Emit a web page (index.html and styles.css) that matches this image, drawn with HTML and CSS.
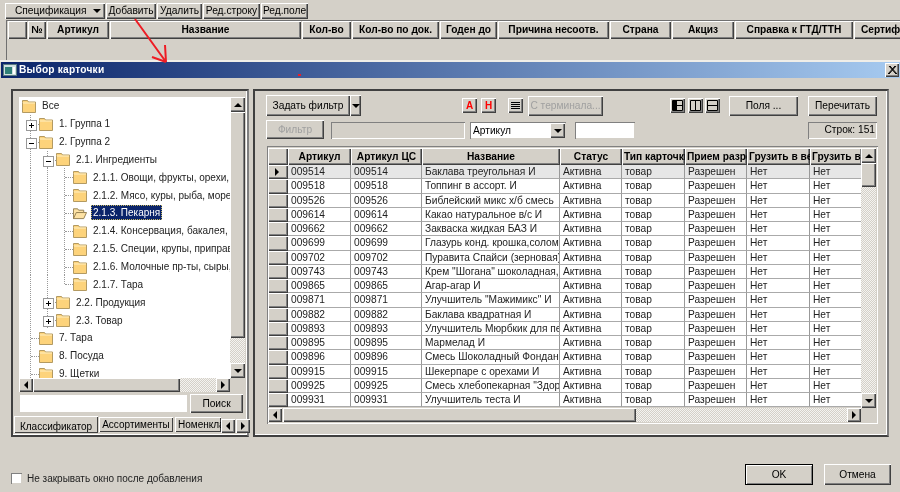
FILE: index.html
```html
<!DOCTYPE html>
<html lang="ru">
<head>
    <meta charset="UTF-8">
    <title>Выбор карточки</title>
    <link rel="stylesheet" href="styles.css">
</head>
<body>
<svg class="defs" width="0" height="0">
    <symbol id="folder" viewBox="0 0 14 14">
        <path d="M0.5 3.5 V1.5 H5.5 L6.5 3 H13.5 V13.5 H0.5 Z" fill="#fdd37b" stroke="#b39a62"/>
        <path d="M1 4 H13" stroke="#fff0c4"/>
    </symbol>
    <symbol id="folder-open" viewBox="0 0 15 14">
        <path d="M0.5 13 V2.5 H5 L6 4 H11.5 V6.5 H14.5 L11.5 13 Z" fill="#fde2a4" stroke="#8f7b4c"/>
        <path d="M0.5 13 L3.5 6.5 H11.5" fill="none" stroke="#8f7b4c"/>
    </symbol>
</svg>

<!-- спецификация за окном -->
<div class="back">
    <div class="back-tools">
        <span class="btn tool spec">Спецификация<i class="tri-down"></i></span>
        <span class="btn tool add">Добавить</span>
        <span class="btn tool del">Удалить</span>
        <span class="btn tool line">Ред.строку</span>
        <span class="btn tool fld">Ред.поле</span>
    </div>
    <div class="back-grid">
        <span class="hcell" style="width:19px"></span>
        <span class="hcell" style="width:18px">№</span>
        <span class="hcell" style="width:62px">Артикул</span>
        <span class="hcell" style="width:191px">Название</span>
        <span class="hcell" style="width:49px">Кол-во</span>
        <span class="hcell" style="width:87px">Кол-во по док.</span>
        <span class="hcell" style="width:57px">Годен до</span>
        <span class="hcell" style="width:111px">Причина несоотв.</span>
        <span class="hcell" style="width:61px">Страна</span>
        <span class="hcell" style="width:62px">Акциз</span>
        <span class="hcell" style="width:118px">Справка к ГТД/ТТН</span>
        <span class="hcell hcell-cut" style="width:60px">Сертификат</span>
    </div>
</div>

<div class="dialog">
    <div class="titlebar">
        <svg class="win-icon" width="14" height="12" viewBox="0 0 14 12">
            <rect x="0.5" y="0.5" width="13" height="11" fill="#cfe0e0" stroke="#5a7a80"/>
            <rect x="2" y="3" width="7" height="7" fill="#2f7f78"/>
            <rect x="10" y="3" width="2" height="7" fill="#fff"/>
        </svg>
        <span class="title-text">Выбор карточки</span>
        <span class="btn close-btn">
            <svg width="9" height="8" viewBox="0 0 9 8"><path d="M1 0 L8 8 M8 0 L1 8 M2 0 L9 8 M7 0 L0 8" stroke="#000" stroke-width="1"/></svg>
        </span>
    </div>

    <div class="panels">
        <div class="frame left-frame">
            <div class="tree-box">
                <div class="tree">
                    <div class="node"><svg class="fld-ico"><use href="#folder"/></svg><span class="node-text">Все</span></div>
                    <div class="node"><i class="ind cross plus"></i><svg class="fld-ico"><use href="#folder"/></svg><span class="node-text">1. Группа 1</span></div>
                    <div class="node"><i class="ind cross minus"></i><svg class="fld-ico"><use href="#folder"/></svg><span class="node-text">2. Группа 2</span></div>
                    <div class="node"><i class="ind vert"></i><i class="ind cross minus"></i><svg class="fld-ico"><use href="#folder"/></svg><span class="node-text">2.1. Ингредиенты</span></div>
                    <div class="node"><i class="ind vert"></i><i class="ind vert"></i><i class="ind tee"></i><svg class="fld-ico"><use href="#folder"/></svg><span class="node-text">2.1.1. Овощи, фрукты, орехи, зелень</span></div>
                    <div class="node"><i class="ind vert"></i><i class="ind vert"></i><i class="ind tee"></i><svg class="fld-ico"><use href="#folder"/></svg><span class="node-text">2.1.2. Мясо, куры, рыба, морепродукты</span></div>
                    <div class="node"><i class="ind vert"></i><i class="ind vert"></i><i class="ind tee"></i><svg class="fld-ico"><use href="#folder-open"/></svg><span class="node-text selected">2.1.3. Пекарня</span></div>
                    <div class="node"><i class="ind vert"></i><i class="ind vert"></i><i class="ind tee"></i><svg class="fld-ico"><use href="#folder"/></svg><span class="node-text">2.1.4. Консервация, бакалея, соусы</span></div>
                    <div class="node"><i class="ind vert"></i><i class="ind vert"></i><i class="ind tee"></i><svg class="fld-ico"><use href="#folder"/></svg><span class="node-text">2.1.5. Специи, крупы, приправы, мука</span></div>
                    <div class="node"><i class="ind vert"></i><i class="ind vert"></i><i class="ind tee"></i><svg class="fld-ico"><use href="#folder"/></svg><span class="node-text">2.1.6. Молочные пр-ты, сыры, масло</span></div>
                    <div class="node"><i class="ind vert"></i><i class="ind vert"></i><i class="ind corner"></i><svg class="fld-ico"><use href="#folder"/></svg><span class="node-text">2.1.7. Тара</span></div>
                    <div class="node"><i class="ind vert"></i><i class="ind cross plus"></i><svg class="fld-ico"><use href="#folder"/></svg><span class="node-text">2.2. Продукция</span></div>
                    <div class="node"><i class="ind vert"></i><i class="ind cross plus"></i><svg class="fld-ico"><use href="#folder"/></svg><span class="node-text">2.3. Товар</span></div>
                    <div class="node"><i class="ind tee"></i><svg class="fld-ico"><use href="#folder"/></svg><span class="node-text">7. Тара</span></div>
                    <div class="node"><i class="ind tee"></i><svg class="fld-ico"><use href="#folder"/></svg><span class="node-text">8. Посуда</span></div>
                    <div class="node"><i class="ind tee"></i><svg class="fld-ico"><use href="#folder"/></svg><span class="node-text">9. Щетки</span></div>
                </div>
                <div class="vbar">
                    <span class="btn sb-btn"><i class="tri-up"></i></span>
                    <span class="btn vthumb tree-vthumb"></span>
                    <span class="sb-track"></span>
                    <span class="btn sb-btn"><i class="tri-down"></i></span>
                </div>
                <div class="hbar">
                    <span class="btn sb-btn"><i class="tri-left"></i></span>
                    <span class="btn hthumb tree-hthumb"></span>
                    <span class="sb-track"></span>
                    <span class="btn sb-btn"><i class="tri-right"></i></span>
                </div>
            </div>
            <div class="search-row">
                <span class="input search-input"></span>
                <span class="btn search-btn">Поиск</span>
            </div>
            <div class="tabs">
                <span class="tab tab-active">Классификатор</span>
                <span class="tab">Ассортименты</span>
                <span class="tab tab-cut">Номенклатура</span>
                <span class="btn tab-arrow arrow-first"><i class="tri-left"></i></span>
                <span class="btn tab-arrow"><i class="tri-right"></i></span>
            </div>
        </div>

        <div class="frame right-frame">
            <div class="row-one">
                <span class="btn filter-btn">Задать фильтр</span>
                <span class="btn filter-drop"><i class="tri-down"></i></span>
                <span class="btn mark mark-a">А</span>
                <span class="btn mark mark-h">Н</span>
                <span class="btn mark mark-list">
                    <svg width="9" height="9" viewBox="0 0 9 9"><path d="M0 1.5H9M0 3.5H9M0 5.5H9M0 7.5H9" stroke="#000"/></svg>
                </span>
                <span class="btn term-btn">С терминала...</span>
                <span class="btn mark view-one">
                    <svg width="11" height="11" viewBox="0 0 11 11"><path d="M0.5 0.5H10.5V10.5H0.5Z" fill="none" stroke="#000"/><path d="M1 1H5V10H1Z" fill="#000"/><path d="M5 5.5H10" stroke="#000"/></svg>
                </span>
                <span class="btn mark view-two">
                    <svg width="11" height="11" viewBox="0 0 11 11"><path d="M0.5 0.5H10.5V10.5H0.5Z M5.5 0.5V10.5" fill="none" stroke="#000"/></svg>
                </span>
                <span class="btn mark view-three">
                    <svg width="11" height="11" viewBox="0 0 11 11"><path d="M0.5 0.5H10.5V10.5H0.5Z M0.5 5.5H10.5" fill="none" stroke="#000"/></svg>
                </span>
                <span class="btn wide-btn fields-btn">Поля ...</span>
                <span class="btn wide-btn reread-btn">Перечитать</span>
            </div>
            <div class="row-two">
                <span class="btn filter-apply">Фильтр</span>
                <span class="input-off filter-text"></span>
                <span class="input combo">Артикул<span class="btn combo-btn"><i class="tri-down"></i></span></span>
                <span class="input value-input"></span>
                <span class="count-box">Строк: 151</span>
            </div>
            <div class="grid-frame">
                <div class="grid-top">
                    <div class="grid-clip">
                        <table class="cards">
                            <colgroup>
                                <col class="c-ind"><col class="c-art"><col class="c-artcs"><col class="c-name"><col class="c-status"><col class="c-type"><col class="c-recv"><col class="c-load"><col class="c-load2">
                            </colgroup>
                            <thead>
                                <tr><th></th><th>Артикул</th><th>Артикул ЦС</th><th>Название</th><th>Статус</th><th>Тип карточки</th><th>Прием разрешен</th><th>Грузить в весы</th><th>Грузить в кассу</th></tr>
                            </thead>
                            <tbody>
                                <tr class="current"><th><i class="tri-right"></i></th><td>009514</td><td>009514</td><td>Баклава треугольная И</td><td>Активна</td><td>товар</td><td>Разрешен</td><td>Нет</td><td>Нет</td></tr>
                                <tr><th></th><td>009518</td><td>009518</td><td>Топпинг в ассорт. И</td><td>Активна</td><td>товар</td><td>Разрешен</td><td>Нет</td><td>Нет</td></tr>
                                <tr><th></th><td>009526</td><td>009526</td><td>Библейский микс х/б смесь</td><td>Активна</td><td>товар</td><td>Разрешен</td><td>Нет</td><td>Нет</td></tr>
                                <tr><th></th><td>009614</td><td>009614</td><td>Какао натуральное в/с И</td><td>Активна</td><td>товар</td><td>Разрешен</td><td>Нет</td><td>Нет</td></tr>
                                <tr><th></th><td>009662</td><td>009662</td><td>Закваска жидкая БАЗ И</td><td>Активна</td><td>товар</td><td>Разрешен</td><td>Нет</td><td>Нет</td></tr>
                                <tr><th></th><td>009699</td><td>009699</td><td>Глазурь конд. крошка,соломка</td><td>Активна</td><td>товар</td><td>Разрешен</td><td>Нет</td><td>Нет</td></tr>
                                <tr><th></th><td>009702</td><td>009702</td><td>Пуравита Спайси (зерновая) И</td><td>Активна</td><td>товар</td><td>Разрешен</td><td>Нет</td><td>Нет</td></tr>
                                <tr><th></th><td>009743</td><td>009743</td><td>Крем "Шогана" шоколадная,орех</td><td>Активна</td><td>товар</td><td>Разрешен</td><td>Нет</td><td>Нет</td></tr>
                                <tr><th></th><td>009865</td><td>009865</td><td>Агар-агар И</td><td>Активна</td><td>товар</td><td>Разрешен</td><td>Нет</td><td>Нет</td></tr>
                                <tr><th></th><td>009871</td><td>009871</td><td>Улучшитель "Мажимикс" И</td><td>Активна</td><td>товар</td><td>Разрешен</td><td>Нет</td><td>Нет</td></tr>
                                <tr><th></th><td>009882</td><td>009882</td><td>Баклава квадратная И</td><td>Активна</td><td>товар</td><td>Разрешен</td><td>Нет</td><td>Нет</td></tr>
                                <tr><th></th><td>009893</td><td>009893</td><td>Улучшитель Мюрбкик для песоч</td><td>Активна</td><td>товар</td><td>Разрешен</td><td>Нет</td><td>Нет</td></tr>
                                <tr><th></th><td>009895</td><td>009895</td><td>Мармелад И</td><td>Активна</td><td>товар</td><td>Разрешен</td><td>Нет</td><td>Нет</td></tr>
                                <tr><th></th><td>009896</td><td>009896</td><td>Смесь Шоколадный Фондан</td><td>Активна</td><td>товар</td><td>Разрешен</td><td>Нет</td><td>Нет</td></tr>
                                <tr><th></th><td>009915</td><td>009915</td><td>Шекерпаре с орехами И</td><td>Активна</td><td>товар</td><td>Разрешен</td><td>Нет</td><td>Нет</td></tr>
                                <tr><th></th><td>009925</td><td>009925</td><td>Смесь хлебопекарная "Здоровье"</td><td>Активна</td><td>товар</td><td>Разрешен</td><td>Нет</td><td>Нет</td></tr>
                                <tr><th></th><td>009931</td><td>009931</td><td>Улучшитель теста И</td><td>Активна</td><td>товар</td><td>Разрешен</td><td>Нет</td><td>Нет</td></tr>
                            </tbody>
                        </table>
                    </div>
                    <div class="vbar grid-vbar">
                        <span class="btn sb-btn"><i class="tri-up"></i></span>
                        <span class="btn vthumb grid-vthumb"></span>
                        <span class="sb-track"></span>
                        <span class="btn sb-btn"><i class="tri-down"></i></span>
                    </div>
                </div>
                <div class="hbar grid-hbar">
                    <span class="btn sb-btn"><i class="tri-left"></i></span>
                    <span class="btn hthumb grid-hthumb"></span>
                    <span class="sb-track"></span>
                    <span class="btn sb-btn"><i class="tri-right"></i></span>
                    <span class="sb-corner"></span>
                </div>
            </div>
        </div>
    </div>

    <div class="footer">
        <span class="check"></span>
        <span class="check-label">Не закрывать окно после добавления</span>
        <span class="btn ok-btn">OK</span>
        <span class="btn cancel-btn">Отмена</span>
    </div>
</div>

<!-- пометка красным поверх скриншота -->
<svg class="scribble" width="310" height="80" viewBox="0 0 310 80">
    <path d="M135 19 L166 62 M166 62 L165 45 M166 62 L152 57" fill="none" stroke="#ee1c24" stroke-width="2"/>
    <rect x="298" y="74" width="3" height="2" fill="#ee1c24"/>
</svg>
</body>
</html>
```

FILE: styles.css
```css
* {
    margin: 0;
    padding: 0;
    box-sizing: border-box;
}

html, body {
    width: 900px;
    height: 492px;
    overflow: hidden;
}

html {
    background: #d4d0c8;
}

/* скриншот в оригинале слегка размыт */
body {
    background: #d4d0c8;
    color: #000;
    font: 10.2px/14px "Liberation Sans", Arial, sans-serif;
    position: relative;
    filter: blur(0.45px);
}

i {
    display: block;
}

.defs {
    position: absolute;
}

/* кнопка в стиле windows classic */
.btn {
    display: flex;
    align-items: center;
    justify-content: center;
    flex: none;
    background: #d4d0c8;
    white-space: nowrap;
    box-shadow: inset 1px 1px #fff, inset -1px -1px #404040, inset -2px -2px #808080;
}

.tri-up, .tri-down, .tri-left, .tri-right {
    width: 0;
    height: 0;
    border-style: solid;
    border-color: transparent;
}
.tri-up { border-width: 0 4px 4px; border-bottom-color: #000; }
.tri-down { border-width: 4px 4px 0; border-top-color: #000; }
.tri-left { border-width: 4px 4px 4px 0; border-right-color: #000; }
.tri-right { border-width: 4px 0 4px 4px; border-left-color: #000; }

/* верх: спецификация */
.back {
    height: 60px;
    padding: 3px 0 0 5px;
    overflow: hidden;
}

.back-tools {
    display: flex;
    gap: 1px;
    height: 16px;
}

.spec { width: 100px; justify-content: space-between; padding: 0 4px 0 10px; }
.add { width: 50px; }
.del { width: 45px; }
.line { width: 57px; }
.fld { width: 47px; }

.back-grid {
    display: flex;
    height: 60px;
    margin: 1px 0 0 1px;
    padding: 0 0 0 1px;
    border: 1px solid #707070;
    width: 920px;
    gap: 1px;
}

.hcell {
    display: block;
    flex: none;
    height: 18px;
    background: #d4d0c8;
    font-weight: bold;
    line-height: 17px;
    text-align: center;
    overflow: hidden;
    white-space: nowrap;
    box-shadow: inset 1px 1px #fff, inset -1px -1px #404040, inset -2px -2px #808080;
}
.hcell-cut { text-align: left; padding-left: 7px; }

/* окно */
.dialog {
    height: 432px;
    border-top: 2px solid #f0eee8;
    background: #d4d0c8;
    position: relative;
}

.titlebar {
    display: flex;
    align-items: center;
    height: 16px;
    margin-left: 1px;
    padding: 0 1px 0 2px;
    background: linear-gradient(to right, #0a246a, #a6caf0);
    color: #fff;
    font-weight: bold;
}

.win-icon {
    flex: none;
    margin-right: 2px;
}

.title-text {
    flex: 1;
    letter-spacing: 0.2px;
}

.close-btn {
    width: 14px;
    height: 14px;
}

.panels {
    display: flex;
    gap: 4px;
    padding: 11px 0 0 11px;
}

.frame {
    height: 348px;
    border: 2px solid #404040;
    border-right-color: #808080;
    border-bottom-color: #404040;
    box-shadow: inset -1px -1px #fff;
}

/* левая панель */
.left-frame {
    width: 238px;
    padding: 6px 2px 0 6px;
}

.tree-box {
    display: grid;
    grid-template-columns: 211px 15px;
    grid-template-rows: 281px 14px;
}

.tree {
    background: #fff;
    padding: 0 0 0 3px;
    overflow: hidden;
}

.node {
    display: flex;
    align-items: center;
    height: 17.85px;
    white-space: nowrap;
}

.fld-ico {
    flex: none;
    width: 14px;
    height: 14px;
}

.node-text {
    margin-left: 4px;
    padding: 0 2px;
    line-height: 15px;
    color: #222;
    font-size: 10px;
}

.selected {
    background: #0a246a;
    color: #fff;
    outline: 1px dotted #c8b860;
    outline-offset: -1px;
}

/* линии дерева */
.ind {
    flex: none;
    align-self: stretch;
    width: 17px;
    position: relative;
}

.vert, .tee, .corner, .cross {
    background-image: repeating-linear-gradient(to bottom, #999 0 1px, transparent 1px 2px);
    background-size: 1px 100%;
    background-position: 8px 0;
    background-repeat: no-repeat;
}

.corner {
    background-size: 1px 50%;
}

.tee::after, .corner::after, .cross::after {
    content: "";
    position: absolute;
    left: 9px;
    top: 9px;
    width: 8px;
    border-top: 1px dotted #999;
}

.cross::before {
    content: "";
    position: absolute;
    left: 4px;
    top: 5px;
    width: 9px;
    height: 9px;
    border: 1px solid #999;
    background: linear-gradient(#000, #000) center/5px 1px no-repeat, #fff;
    z-index: 1;
}

.plus::before {
    background: linear-gradient(#000, #000) center/5px 1px no-repeat,
        linear-gradient(#000, #000) center/1px 5px no-repeat, #fff;
}

/* полосы прокрутки */
.vbar {
    display: flex;
    flex-direction: column;
}

.hbar {
    display: flex;
}

.sb-btn {
    width: 15px;
    height: 15px;
}

.hbar .sb-btn {
    width: 14px;
    height: 14px;
}

.sb-track {
    flex: 1;
    background: repeating-conic-gradient(#d4d0c8 0 25%, #f4f3f0 0 50%) 0 0/2px 2px;
}

.vthumb {
    width: 15px;
}

.hthumb {
    height: 14px;
}

.tree-vthumb { height: 226px; }
.tree-hthumb { width: 147px; }
.grid-vthumb { height: 24px; }
.grid-hthumb { width: 353px; margin-left: 1px; }

/* поиск и вкладки */
.search-row {
    display: flex;
    gap: 2px;
    height: 19px;
    margin-top: 2px;
    width: 224px;
}

.input {
    display: block;
    background: #fff;
    box-shadow: inset 1px 1px #808080, inset 2px 2px #404040, inset -1px -1px #fff;
}

.search-input {
    width: 169px;
    height: 19px;
    box-shadow: inset 1px 1px #d4d0c8, inset -1px -1px #d4d0c8;
}

.search-btn {
    width: 53px;
    height: 19px;
}

.tabs {
    display: flex;
    align-items: flex-start;
    height: 18px;
    margin: 3px 0 0 -5px;
    font-size: 10px;
}

.tab {
    flex: none;
    height: 15px;
    margin: 1px 0 0 1px;
    padding: 0 2px;
    line-height: 16px;
    background: #d4d0c8;
    box-shadow: inset 1px 1px #fff, inset -1px -1px #404040;
    white-space: nowrap;
    width: 74px;
    text-align: center;
}

.tab-active {
    width: 84px;
    height: 17px;
    margin: 0;
    line-height: 21px;
}

.tab-cut {
    width: 46px;
    overflow: hidden;
    text-align: left;
    padding-left: 3px;
    margin-left: 2px;
}

.tab-arrow {
    width: 14px;
    height: 14px;
    margin-top: 3px;
}

.arrow-first {
    margin-right: 1px;
}

/* правая панель */
.right-frame {
    width: 636px;
    padding: 4px 0 0 11px;
}

.row-one {
    display: flex;
    align-items: center;
    height: 21px;
}

.filter-btn { width: 84px; height: 21px; }
.filter-drop { width: 11px; height: 21px; }

.mark {
    width: 15px;
    height: 15px;
    font-weight: bold;
    font-size: 10px;
}

.mark-a { margin-left: 101px; color: #f00; }
.mark-h { margin-left: 4px; color: #f00; }
.mark-list { margin-left: 12px; }

.term-btn {
    width: 75px;
    height: 20px;
    margin-left: 5px;
    color: #a0a0a0;
}

.view-one { margin-left: 67px; }
.view-two { margin-left: 3px; }
.view-three { margin-left: 2px; }

.wide-btn {
    width: 69px;
    height: 20px;
}

.fields-btn { margin-left: 9px; }
.reread-btn { margin-left: 10px; }

.row-two {
    display: flex;
    align-items: flex-end;
    height: 19px;
    margin-top: 4px;
}

.filter-apply {
    width: 58px;
    height: 19px;
    color: #a0a0a0;
}

.input-off {
    display: block;
    width: 134px;
    height: 17px;
    margin-left: 7px;
    background: #d4d0c8;
    box-shadow: inset 1px 1px #808080, inset -1px -1px #fff;
}

.combo {
    display: flex;
    align-items: center;
    justify-content: space-between;
    width: 96px;
    height: 17px;
    margin-left: 5px;
    padding: 0 1px 0 3px;
    line-height: 15px;
    box-shadow: inset 1px 1px #808080, inset -1px -1px #d4d0c8;
}

.combo-btn {
    width: 15px;
    height: 15px;
}

.value-input {
    width: 60px;
    height: 17px;
    margin-left: 9px;
    box-shadow: inset 1px 1px #808080, inset -1px -1px #d4d0c8;
}

.count-box {
    display: block;
    width: 69px;
    height: 17px;
    margin-left: 173px;
    padding-right: 2px;
    text-align: right;
    line-height: 15px;
    box-shadow: inset 1px 1px #808080, inset -1px -1px #fff;
}

.grid-frame {
    width: 611px;
    height: 278px;
    margin: 7px 0 0 1px;
    padding: 2px 2px 2px 1px;
    background: #d4d0c8;
    box-shadow: inset 1px 1px #808080, inset -1px -1px #fff;
}

.grid-top {
    display: flex;
    height: 260px;
}

.grid-clip {
    width: 594px;
    overflow: hidden;
    background: #d4d0c8;
}

.grid-vbar {
    flex: none;
    width: 15px;
}

.cards {
    table-layout: fixed;
    border-collapse: separate;
    border-spacing: 0;
    width: 594px;
}

.c-ind { width: 20px; }
.c-art { width: 63px; }
.c-artcs { width: 71px; }
.c-name { width: 138px; }
.c-status { width: 62px; }
.c-type { width: 63px; }
.c-recv { width: 62px; }
.c-load { width: 63px; }
.c-load2 { width: 52px; }

.cards th, .cards td {
    overflow: hidden;
    white-space: nowrap;
}

.cards thead th {
    height: 17px;
    padding: 0 2px;
    font-weight: bold;
    line-height: 15px;
    box-shadow: inset 1px 1px #fff, inset -1px -1px #404040, inset -2px -2px #808080;
}

.cards td {
    height: 14.25px;
    padding: 0 2px 0 3px;
    background: #fff;
    line-height: 13px;
    color: #222;
    border-right: 1px solid #999;
    border-bottom: 1px solid #aaa;
}

.cards tbody th {
    box-shadow: inset 1px 1px #fff, inset -1px -1px #404040, inset -2px -2px #808080;
    padding-left: 7px;
}

.current td {
    background: #e6e6e6;
}

.grid-hbar {
    height: 14px;
}

.sb-corner {
    width: 15px;
    flex: none;
}

/* низ окна */
.footer {
    display: flex;
    align-items: center;
    margin-top: 27px;
    padding-left: 11px;
    height: 21px;
}

.check {
    display: block;
    width: 11px;
    height: 11px;
    margin-top: 8px;
    background: #fff;
    box-shadow: inset 1px 1px #808080, inset -1px -1px #d4d0c8;
}

.check-label {
    margin: 8px 0 0 5px;
    color: #222;
    font-size: 10px;
}

.ok-btn {
    width: 68px;
    height: 21px;
    margin-left: auto;
    box-shadow: 0 0 0 1px #000 inset, inset 2px 2px #fff, inset -2px -2px #808080;
}

.cancel-btn {
    width: 67px;
    height: 21px;
    margin: 0 9px 0 11px;
}

.scribble {
    position: absolute;
    left: 0;
    top: 0;
    pointer-events: none;
}
```
